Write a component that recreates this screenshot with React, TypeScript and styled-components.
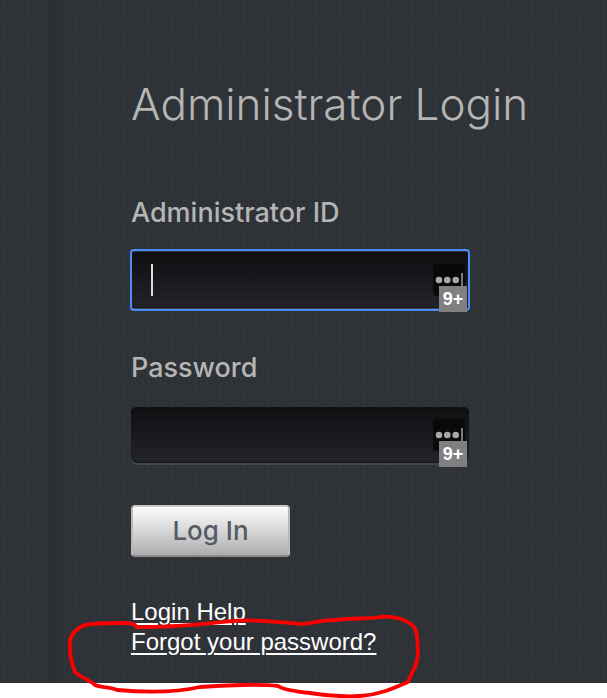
import React, { useState } from "react";
import styled, { createGlobalStyle, css } from "styled-components";

const GlobalStyle = createGlobalStyle`
  *, *::before, *::after { box-sizing: border-box; }
  body {
    margin: 0;
    background: #ffffff;
    font-family: "Liberation Sans", Arial, sans-serif;
  }
`;

const Page = styled.main`
  position: relative;
  padding: 76px 52px 26px 131px;
  margin-bottom: 15px;
  background-color: #2f3338;
  background-image:
    linear-gradient(90deg, transparent 48px, rgba(0, 0, 0, 0.1) 52px, transparent 62px),
    repeating-linear-gradient(118deg, rgba(255, 255, 255, 0.006) 0 2px, transparent 2px 5px),
    repeating-linear-gradient(90deg, rgba(0, 0, 0, 0.04) 0 2px, transparent 2px 6px);
`;

const Title = styled.h1`
  margin: 0 0 65px;
  font-family: Inter, "Liberation Sans", sans-serif;
  font-size: 44px;
  font-weight: 300;
  line-height: 56px;
  color: #b5b5b5;
  white-space: nowrap;
`;

const Form = styled.form`
  display: flex;
  flex-direction: column;
  align-items: flex-start;
`;

const Field = styled.div`
  width: 100%;
  max-width: 338px;
  margin-bottom: 42px;
  &:last-of-type { margin-bottom: 40px; }
`;

const Label = styled.label`
  display: block;
  margin-bottom: 21px;
  font-family: Inter, "Liberation Sans", sans-serif;
  font-size: 27px;
  font-weight: 500;
  line-height: 32px;
  color: #b5b5b5;
`;

const InputWrap = styled.div`
  position: relative;
`;

const Input = styled.input<{ $active?: boolean }>`
  display: block;
  width: 100%;
  height: 60px;
  padding: 0 48px 0 20px;
  border: 0;
  border-top: 2px solid transparent;
  border-radius: 6px;
  background: linear-gradient(#0e0f11, #191a1d 50%, #232529) padding-box;
  box-shadow: inset 0 -2px 0 #44474a, inset 0 -3px 1px #15171a;
  font: 26px/32px "Liberation Sans", Arial, sans-serif;
  color: #dddddd;
  caret-color: transparent;
  outline: none;
  ${(p) =>
    p.$active &&
    css`
      border-radius: 3px;
      outline: 2px solid #4a8df8;
      outline-offset: -1px;
    `}
`;

const Caret = styled.span`
  position: absolute;
  left: 20px;
  top: 14px;
  width: 2px;
  height: 32px;
  background: #dcdcdc;
`;

const Manager = styled.span`
  position: absolute;
  right: 4px;
  top: 14px;
  width: 32px;
  height: 32px;
  border-radius: 4px;
  background: #08090a;
  svg { display: block; }
`;

const Count = styled.span`
  position: absolute;
  right: 2px;
  top: 36px;
  width: 28px;
  height: 26px;
  background: #808080;
  color: #ffffff;
  font-size: 18px;
  font-weight: 700;
  line-height: 26px;
  text-align: center;
`;

const Submit = styled.button`
  width: 159px;
  height: 52px;
  margin-bottom: 40px;
  padding: 0;
  border: 2px solid;
  border-color: #c9c9c9 #b9b9b9 #8b8b8b;
  border-radius: 4px;
  background: linear-gradient(#fbfbfb, #d6d6d6 50%, #adadad);
  font-family: Inter, "Liberation Sans", sans-serif;
  font-size: 26px;
  font-weight: 500;
  line-height: 32px;
  color: #555b64;
`;

const Links = styled.nav`
  display: flex;
  flex-direction: column;
  align-items: flex-start;
`;

const HelpLink = styled.a`
  color: #ffffff;
  font-size: 24px;
  line-height: 30px;
  text-decoration: underline;
  text-decoration-thickness: 2px;
  text-underline-offset: 3px;
  white-space: nowrap;
`;

const Marked = styled.div`
  position: relative;
`;

const Scribble = styled.svg`
  position: absolute;
  left: -65px;
  top: -15px;
  overflow: visible;
  pointer-events: none;
`;

interface LoginFieldProps {
  id: string;
  label: string;
  type: string;
  active?: boolean;
}

function LoginField({ id, label, type, active }: LoginFieldProps) {
  const [value, setValue] = useState("");
  return (
    <Field>
      <Label htmlFor={id}>{label}</Label>
      <InputWrap>
        <Input id={id} type={type} value={value} $active={active} onChange={(e) => setValue(e.target.value)} />
        {active && value === "" && <Caret />}
        <Manager>
          <svg width="32" height="32" viewBox="0 0 32 32" aria-hidden="true">
            <g fill="#a8a8a8">
              <circle cx="6" cy="16" r="3.3" />
              <circle cx="14.3" cy="16" r="3.3" />
              <circle cx="22.7" cy="16" r="3.3" />
              <rect x="28" y="9" width="2" height="14" fill="#77797b" />
            </g>
          </svg>
        </Manager>
        <Count>9+</Count>
      </InputWrap>
    </Field>
  );
}

export default function App() {
  return (
    <>
      <GlobalStyle />
      <Page>
        <Title>Administrator Login</Title>
        <Form onSubmit={(e) => e.preventDefault()}>
          <LoginField id="admin-id" label="Administrator ID" type="text" active />
          <LoginField id="password" label="Password" type="password" />
          <Submit type="submit">Log In</Submit>
        </Form>
        <Links>
          <HelpLink href="#help">Login Help</HelpLink>
          <Marked>
            <HelpLink href="#forgot">Forgot your password?</HelpLink>
            <Scribble width="360" height="85" viewBox="66 612 360 85" aria-hidden="true">
              <path
                d="M137 627 C134 623 130 623 126 623 C110 623 96 623 85 625 C77 628 71 633 70 642 C69 653 72 664 75 672 C80 677 88 679 95 685 C101 688 108 686 117 690 C140 692 174 693 200 687 C225 685 262 684 278 686 C284 690 300 692 310 693 C330 696 345 697 360 696 C378 695 392 689 408 682 C411 673 417 668 418 654 C417 642 419 630 411 624 C402 618 390 616 380 617 C370 619 350 618 335 620 C320 620 310 624 300 624 C280 622 255 619 233 621 C205 624 170 628 137 627"
                fill="none"
                stroke="#fb0000"
                strokeWidth="3.8"
                strokeLinecap="round"
                strokeLinejoin="round"
              />
            </Scribble>
          </Marked>
        </Links>
      </Page>
    </>
  );
}
